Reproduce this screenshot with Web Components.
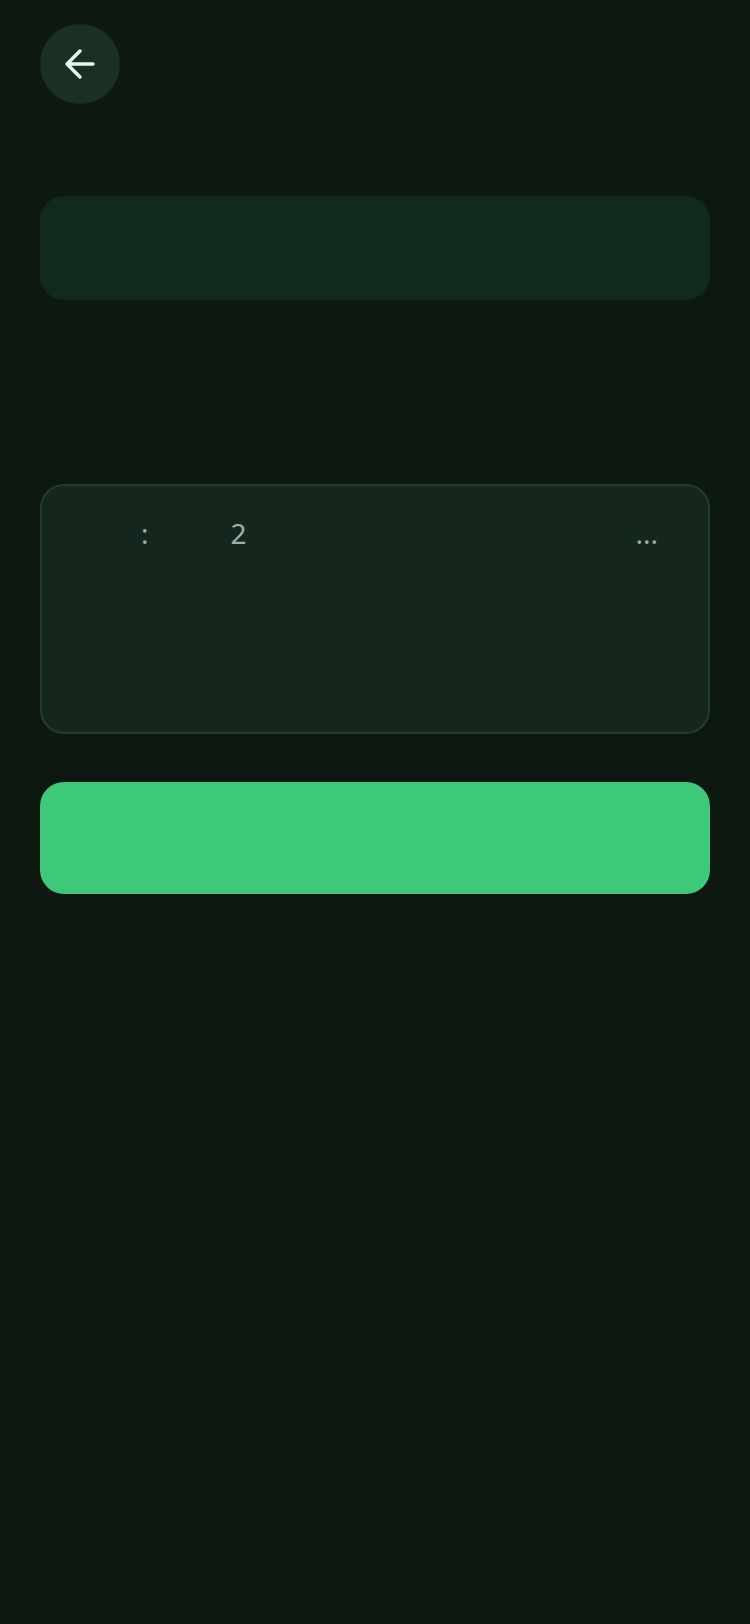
<!DOCTYPE html>
<html>
<head>
<meta charset="utf-8">
<style>
    html, body { margin: 0; background: #0c1810; }
    body { width: 750px; min-height: 1624px; font-family: "Noto Sans", sans-serif; }
</style>
</head>
<body>
<app-screen>
    <back-button></back-button>
    <blank-card></blank-card>
    <info-card>
        <span slot="label">:</span>
        <span slot="value">2</span>
        <span slot="more">...</span>
    </info-card>
    <primary-button></primary-button>
</app-screen>

<script>
class AppScreen extends HTMLElement {
    constructor() {
        super()
        this.attachShadow({mode: 'open'}).innerHTML = `
            <style>
                :host { display: flex; flex-direction: column; padding: 24px 40px 0; box-sizing: border-box; width: 750px; }
            </style>
            <slot></slot>
        `
    }
}

class BackButton extends HTMLElement {
    constructor() {
        super()
        this.attachShadow({mode: 'open'}).innerHTML = `
            <style>
                :host { display: flex; align-items: center; justify-content: center; width: 80px; height: 80px; border-radius: 50%; background: #1b3024; }
                svg { display: block; }
            </style>
            <svg width="32" height="32" viewBox="0 0 32 32" fill="none" stroke="#e8f6ec" stroke-width="3.5" stroke-linecap="round" stroke-linejoin="round">
                <path d="M3 16H29M16 3L3 16L16 29"/>
            </svg>
        `
    }
}

class BlankCard extends HTMLElement {
    constructor() {
        super()
        this.attachShadow({mode: 'open'}).innerHTML = `
            <style>
                :host { display: block; height: 104px; margin-top: 92px; border-radius: 24px; background: #122a1b; }
            </style>
        `
    }
}

class InfoCard extends HTMLElement {
    constructor() {
        super()
        this.attachShadow({mode: 'open'}).innerHTML = `
            <style>
                :host { display: block; box-sizing: border-box; height: 250px; margin-top: 184px; padding: 28px 50px 0 99px; border: 2px solid #263a2e; border-radius: 24px; background: #15261d; color: #9fb0a6; font-size: 28px; line-height: 38px; }
                .row { display: flex; align-items: baseline; }
                .value { margin-left: 82px; }
                .more { margin-left: auto; }
            </style>
            <div class="row">
                <slot name="label"></slot>
                <span class="value"><slot name="value"></slot></span>
                <span class="more"><slot name="more"></slot></span>
            </div>
        `
    }
}

class PrimaryButton extends HTMLElement {
    constructor() {
        super()
        this.attachShadow({mode: 'open'}).innerHTML = `
            <style>
                :host { display: block; height: 112px; margin-top: 48px; border-radius: 24px; background: #3dc979; }
            </style>
        `
    }
}

customElements.define('app-screen', AppScreen)
customElements.define('back-button', BackButton)
customElements.define('blank-card', BlankCard)
customElements.define('info-card', InfoCard)
customElements.define('primary-button', PrimaryButton)
</script>
</body>
</html>
